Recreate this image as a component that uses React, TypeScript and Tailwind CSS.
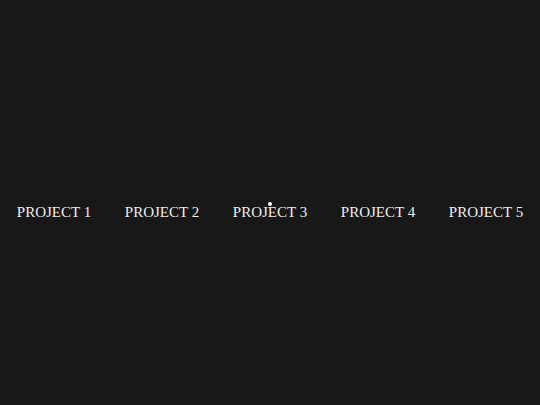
import React from "react";

const projects = ["PROJECT 1", "PROJECT 2", "PROJECT 3", "PROJECT 4", "PROJECT 5"];

export default function App() {
  return (
    <div className="relative flex h-screen w-full items-center bg-[#181818] pt-[19px]">
      <div className="grid w-full grid-cols-5">
        {projects.map((p) => (
          <div
            key={p}
            className="text-center text-[15px] leading-6 text-[#ececec] [font-family:'Liberation_Serif',serif]"
          >
            {p}
          </div>
        ))}
      </div>
      {/* cursor dot */}
      <div className="pointer-events-none absolute left-[268px] top-[202px] h-[4px] w-[4px] rounded-full bg-white" />
    </div>
  );
}
